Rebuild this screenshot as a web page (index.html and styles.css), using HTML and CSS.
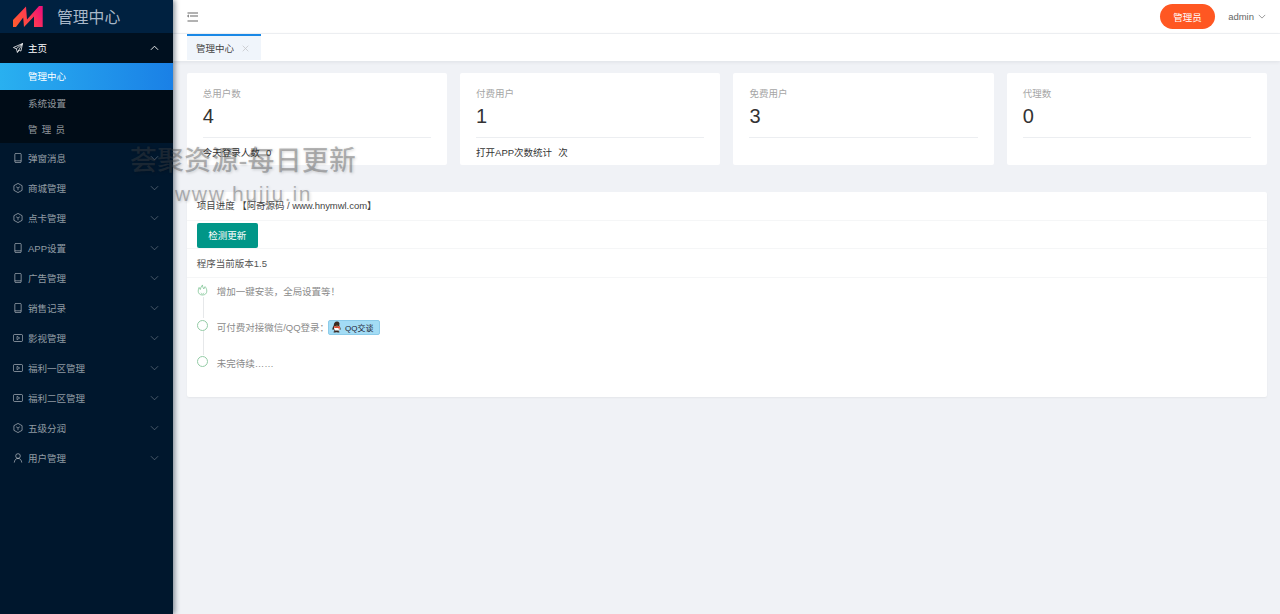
FILE: index.html
```html
<!DOCTYPE html>
<html lang="zh-CN">
<head>
<meta charset="utf-8">
<title>管理中心</title>
<link rel="stylesheet" href="styles.css">
</head>
<body>
<svg class="defs" width="0" height="0">
  <symbol id="i-phone" viewBox="0 0 12 12"><rect x="2.200" y="0.500" width="7.600" height="11" rx="1.300" fill="none" stroke="currentColor" stroke-width="1"/><path d="M2.200 9.400h7.600" stroke="currentColor" stroke-width="1"/></symbol>
  <symbol id="i-box" viewBox="0 0 12 12"><path d="M6 .5l4.900 2.700v5.600L6 11.500 1.100 8.800V3.200z" fill="none" stroke="currentColor" stroke-width="1" stroke-linejoin="round"/><path d="M3.700 4.500L6 5.900l2.300-1.400M6 5.900v2.700" fill="none" stroke="currentColor" stroke-width=".9"/></symbol>
  <symbol id="i-video" viewBox="0 0 12 12"><rect x=".5" y="1.800" width="11" height="8.400" rx="1.400" fill="none" stroke="currentColor" stroke-width="1"/><path d="M4.800 4l3.200 2-3.200 2z" fill="none" stroke="currentColor" stroke-width=".9"/></symbol>
  <symbol id="i-user" viewBox="0 0 12 12"><circle cx="6" cy="3.600" r="2.800" fill="none" stroke="currentColor" stroke-width="1"/><path d="M1.500 11.500c.3-3 2-5 4.500-5s4.200 2 4.500 5" fill="none" stroke="currentColor" stroke-width="1"/></symbol>
  <symbol id="i-down" viewBox="0 0 10 6"><path d="M1 1l4 4 4-4" fill="none" stroke="currentColor" stroke-width=".9"/></symbol>
  <symbol id="i-up" viewBox="0 0 10 6"><path d="M1 5l4-4 4 4" fill="none" stroke="currentColor" stroke-width="1"/></symbol>
</svg>
<div class="shell">
  <aside class="sidebar">
    <div class="brand">
      <svg class="logo" viewBox="0 0 30 21" width="30" height="21">
        <defs><linearGradient id="lg" x1="0" y1=".7" x2="1" y2=".3"><stop offset="0" stop-color="#ff5a30"/><stop offset=".55" stop-color="#ff3a50"/><stop offset="1" stop-color="#ee1277"/></linearGradient></defs>
        <path d="M0 21V14L13 .5l1 13L26 0h3.700V21H21V10.500L11 21l-.8-9.500L3 21z" fill="url(#lg)"/>
      </svg>
      <span class="brand-name">管理中心</span>
    </div>
    <nav class="menu">
      <div class="menu-item open">
        <svg class="mi" viewBox="0 0 12 12"><path d="M11.500 .6L.5 5.400l3.500 1.500 1.300 4.400 1.900-2.900 2.300 1.300zM4 6.900L11.500 .6 5.300 11.300" fill="none" stroke="currentColor" stroke-width=".9"/></svg>
        <span class="label">主页</span>
        <svg class="chev"><use href="#i-up"/></svg>
      </div>
      <div class="submenu">
        <div class="sub active">管理中心</div>
        <div class="sub">系统设置</div>
        <div class="sub wide">管理员</div>
      </div>
      <div class="menu-item"><svg class="mi"><use href="#i-phone"/></svg><span class="label">弹窗消息</span><svg class="chev"><use href="#i-down"/></svg></div>
      <div class="menu-item"><svg class="mi"><use href="#i-box"/></svg><span class="label">商城管理</span><svg class="chev"><use href="#i-down"/></svg></div>
      <div class="menu-item"><svg class="mi"><use href="#i-box"/></svg><span class="label">点卡管理</span><svg class="chev"><use href="#i-down"/></svg></div>
      <div class="menu-item"><svg class="mi"><use href="#i-phone"/></svg><span class="label">APP设置</span><svg class="chev"><use href="#i-down"/></svg></div>
      <div class="menu-item"><svg class="mi"><use href="#i-phone"/></svg><span class="label">广告管理</span><svg class="chev"><use href="#i-down"/></svg></div>
      <div class="menu-item"><svg class="mi"><use href="#i-phone"/></svg><span class="label">销售记录</span><svg class="chev"><use href="#i-down"/></svg></div>
      <div class="menu-item"><svg class="mi"><use href="#i-video"/></svg><span class="label">影视管理</span><svg class="chev"><use href="#i-down"/></svg></div>
      <div class="menu-item"><svg class="mi"><use href="#i-video"/></svg><span class="label">福利一区管理</span><svg class="chev"><use href="#i-down"/></svg></div>
      <div class="menu-item"><svg class="mi"><use href="#i-video"/></svg><span class="label">福利二区管理</span><svg class="chev"><use href="#i-down"/></svg></div>
      <div class="menu-item"><svg class="mi"><use href="#i-box"/></svg><span class="label">五级分润</span><svg class="chev"><use href="#i-down"/></svg></div>
      <div class="menu-item"><svg class="mi"><use href="#i-user"/></svg><span class="label">用户管理</span><svg class="chev"><use href="#i-down"/></svg></div>
    </nav>
  </aside>
  <main class="main">
    <header class="topbar">
      <svg class="toggle" viewBox="0 0 11 10"><path d="M.5 1h10.500M3 4h8M.5 9h10.500" stroke="#666" stroke-width="1.100" fill="none"/><path d="M2 2.900L.5 4 2 5.100" stroke="#555" stroke-width=".9" fill="none"/></svg>
      <div class="top-right">
        <span class="role">管理员</span>
        <span class="user">admin</span>
        <svg class="user-chev"><use href="#i-down"/></svg>
      </div>
    </header>
    <div class="tabs">
      <div class="tab"><span>管理中心</span><svg class="close" viewBox="0 0 8 8"><path d="M.8 .8l6.400 6.400M7.200 .8L.8 7.200" stroke="#c4c6c9" stroke-width=".9" fill="none"/></svg></div>
    </div>
    <div class="content">
      <section class="cards">
        <div class="card"><div class="card-title">总用户数</div><div class="card-num">4</div><div class="card-foot">今天登录人数&nbsp;&nbsp;&nbsp;0</div></div>
        <div class="card"><div class="card-title">付费用户</div><div class="card-num">1</div><div class="card-foot">打开APP次数统计&nbsp;&nbsp;&nbsp;次</div></div>
        <div class="card"><div class="card-title">免费用户</div><div class="card-num">3</div><div class="card-foot"></div></div>
        <div class="card"><div class="card-title">代理数</div><div class="card-num">0</div><div class="card-foot"></div></div>
      </section>
      <section class="panel">
        <div class="row row-title">项目进度 【阿奇源码 / www.hnymwl.com】</div>
        <div class="row row-btn"><button class="check">检测更新</button></div>
        <div class="row row-ver">程序当前版本1.5</div>
        <ul class="timeline">
          <li class="tl-item first">
            <svg class="node-fire" viewBox="0 0 12 12"><path d="M6 11.500c-2.800 0-4.700-1.700-4.700-4.300 0-1.600.5-2.800 1-4l1.300 2.300C3.900 3.600 4.700 1.800 6 .5c-.2 1.700.8 3 1.400 4.400L8.800 2.300c1.200 1.400 1.900 3 1.900 4.900 0 2.600-1.900 4.300-4.700 4.300z" fill="none" stroke="#85c79a" stroke-width=".9"/><path d="M4.300 9c.3 1 1 1.500 1.700 1.500S7.400 10 7.700 9" fill="none" stroke="#85c79a" stroke-width=".7"/></svg>
            <span class="tl-text">增加一键安装，全局设置等！</span>
          </li>
          <li class="tl-item second">
            <span class="node"></span>
            <span class="tl-text">可付费对接微信/QQ登录：</span>
            <span class="qq">
              <svg viewBox="0 0 12 12" width="12" height="12"><path d="M6 .4C3.800 .4 2.800 2.200 2.800 4.200c0 .6-1.400 2.200-1.400 3.800 0 1.100.7 1.100 1.300.3.200.7.500 1.200 1 1.600-.8.200-1.200.6-1.200 1 0 .7 1.400.8 2.400.4.300-.2.900-.2 1.200 0 1 .4 2.400.3 2.400-.4 0-.4-.4-.8-1.200-1 .5-.4.800-.9 1-1.600.6.800 1.300.8 1.300-.3 0-1.600-1.400-3.200-1.400-3.800C9.200 2.200 8.200.4 6 .4z" fill="#3a2a22"/><path d="M3.300 5.300c1.800.6 3.600.6 5.400 0 .4 1.200.4 3.200-.8 4.300H4.100C2.900 8.500 2.900 6.500 3.300 5.300z" fill="#fff"/><path d="M3.100 5.100c1.900.8 3.900.8 5.800 0l.2 1.300c-2 .9-4.200.9-6.200 0z" fill="#e4472b"/><path d="M4.800 4c.8.500 1.600.5 2.400 0L6 4.900z" fill="#f5b41e"/><path d="M7.600 6.300h1v2h-1z" fill="#e4472b"/></svg>
              <span>QQ交谈</span>
            </span>
          </li>
          <li class="tl-item last">
            <span class="node"></span>
            <span class="tl-text">未完待续……</span>
          </li>
        </ul>
      </section>
    </div>
  </main>
</div>
<div class="watermark wm-a">荟聚资源-每日更新</div>
<div class="watermark wm-b">www.huiju.in</div>
</body>
</html>
```

FILE: styles.css
```css
* { box-sizing: border-box; }
html, body { margin: 0; padding: 0; height: 100%; overflow: hidden; }
body {
  font-family: "Liberation Sans", "Noto Sans CJK SC", sans-serif;
  font-size: 9.5px;
  color: #333;
  background: #f0f2f6;
  position: relative;
}
.defs { position: absolute; }
.shell { display: flex; height: 614px; }

.sidebar {
  width: 173px;
  flex: none;
  background: #00172d;
  box-shadow: 2px 0 5px rgba(0, 21, 41, .45);
  position: relative;
  z-index: 2;
}
.brand {
  height: 33px;
  background: #002140;
  display: flex;
  align-items: center;
  padding-left: 13px;
}
.logo { flex: none; display: block; }
.brand-name {
  margin-left: 14px;
  font-size: 15.800px;
  color: #a9b8c8;
  white-space: nowrap;
}
.menu-item {
  height: 30px;
  display: flex;
  align-items: center;
  padding-left: 13px;
  color: rgba(255, 255, 255, .58);
}
.menu-item.open { color: #fff; background: #00101f; }
.mi { width: 10px; height: 10px; flex: none; }
.label { margin-left: 5px; flex: 1; white-space: nowrap; }
.chev { width: 9px; height: 6px; flex: none; margin-right: 14.500px; opacity: .6; }
.menu-item.open .chev { opacity: 1; }
.submenu { background: #000c17; }
.sub {
  height: 26.700px;
  line-height: 27.700px;
  padding-left: 28px;
  color: rgba(255, 255, 255, .58);
}
.sub.active {
  color: #fff;
  background: linear-gradient(90deg, #29b0f0, #1a80e6);
}
.sub.wide { letter-spacing: 4.200px; }

.main { flex: 1; min-width: 0; display: flex; flex-direction: column; }
.topbar {
  height: 34px;
  flex: none;
  background: #fff;
  border-bottom: 1px solid #f0f2f5;
  display: flex;
  align-items: center;
  justify-content: space-between;
  padding: 0 14px 0 14px;
}
.toggle { width: 11px; height: 10px; display: block; }
.top-right { display: flex; align-items: center; }
.role {
  width: 55px;
  height: 25px;
  border-radius: 13px;
  background: #ff5722;
  color: #fff;
  display: flex;
  align-items: center;
  justify-content: center;
}
.user { margin-left: 13px; color: #666; font-size: 9.500px; }
.user-chev { width: 8px; height: 5px; margin-left: 4px; color: #777; }

.tabs {
  height: 27px;
  flex: none;
  background: #fff;
  padding-left: 14px;
  box-shadow: 0 1px 4px rgba(0, 21, 41, .08);
  position: relative;
}
.tab {
  width: 74px;
  height: 26px;
  background: #f0f5fb;
  border-top: 2px solid #1a88e6;
  padding-left: 9px;
  display: flex;
  align-items: center;
  color: #444;
}
.close { width: 7px; height: 7px; margin-left: 7.500px; }

.content { flex: 1; padding: 12px 13px 0 13.800px; }
.cards { display: grid; grid-template-columns: repeat(4, 1fr); gap: 13px; }
.card {
  height: 92px;
  background: #fff;
  border-radius: 2px;
  padding: 14px 16px 0;
}
.card-title { color: #a5a5a5; line-height: 13px; }
.card-num {
  font-size: 20px;
  line-height: 23px;
  color: #333;
  margin-top: 5px;
  height: 33px;
  border-bottom: 1px solid #eceef1;
}
.card-foot { color: #333; line-height: 14px; margin-top: 8px; word-spacing: -.6px; }

.panel {
  margin-top: 27px;
  height: 205px;
  background: #fff;
  border-radius: 2px;
  box-shadow: 0 1px 2px rgba(0, 0, 0, .05);
}
.row { padding: 0 10px; display: flex; align-items: center; border-bottom: 1px solid #f5f6f7; }
.row-title { height: 29px; color: #444; padding-bottom: 2px; letter-spacing: -.05px; }
.row-btn { height: 28px; padding-top: 2px; }
.check {
  width: 61px;
  height: 25px;
  border: 0;
  border-radius: 2px;
  background: #009688;
  color: #fff;
  font: inherit;
  padding: 0 0 2px;
}
.row-ver { height: 29px; color: #555; }

.timeline { list-style: none; margin: 0; padding: 0 0 0 16px; }
.tl-item { display: flex; align-items: center; position: relative; height: 14px; color: #8a8a8a; }
.tl-item.first { margin-top: 6px; }
.tl-item.second { margin-top: 21px; height: 16px; }
.tl-item.last { margin-top: 21px; height: 14px; }
.tl-item.second::before, .tl-item.last::before {
  content: "";
  position: absolute;
  left: 0;
  width: 1px;
  background: #e6e8ea;
}
.tl-item.second::before { top: -22px; height: 21px; }
.tl-item.last::before { top: -25px; height: 24px; }
.node-fire { width: 11px; height: 12px; margin: 0 0 2px -5.500px; flex: none; }
.node {
  width: 11px;
  height: 11px;
  border: 1.200px solid #94cca6;
  border-radius: 50%;
  margin: 0 0 4px -5.500px;
  flex: none;
}
.tl-item.last .node { margin-bottom: 3px; }
.tl-text { margin-left: 8.500px; white-space: nowrap; letter-spacing: -.02px; }
.qq {
  margin-left: -1px;
  width: 52px;
  height: 15px;
  background: #a3dcf5;
  border: 1px solid #8ccbe9;
  border-radius: 2px;
  display: flex;
  align-items: center;
  padding-left: 2px;
  gap: 2px;
  color: #223;
  font-size: 8px;
  white-space: nowrap;
}

.watermark {
  position: absolute;
  z-index: 5;
  color: rgba(70, 70, 70, .38);
  text-shadow: 1px 1px 3px rgba(0, 0, 0, .16);
  white-space: nowrap;
  pointer-events: none;
}
.wm-a { left: 130px; top: 146px; font-size: 26.800px; letter-spacing: .3px; line-height: 30px; font-weight: 500; }
.wm-b { left: 175px; top: 181px; font-size: 21px; letter-spacing: 1.700px; line-height: 26px; }
```
